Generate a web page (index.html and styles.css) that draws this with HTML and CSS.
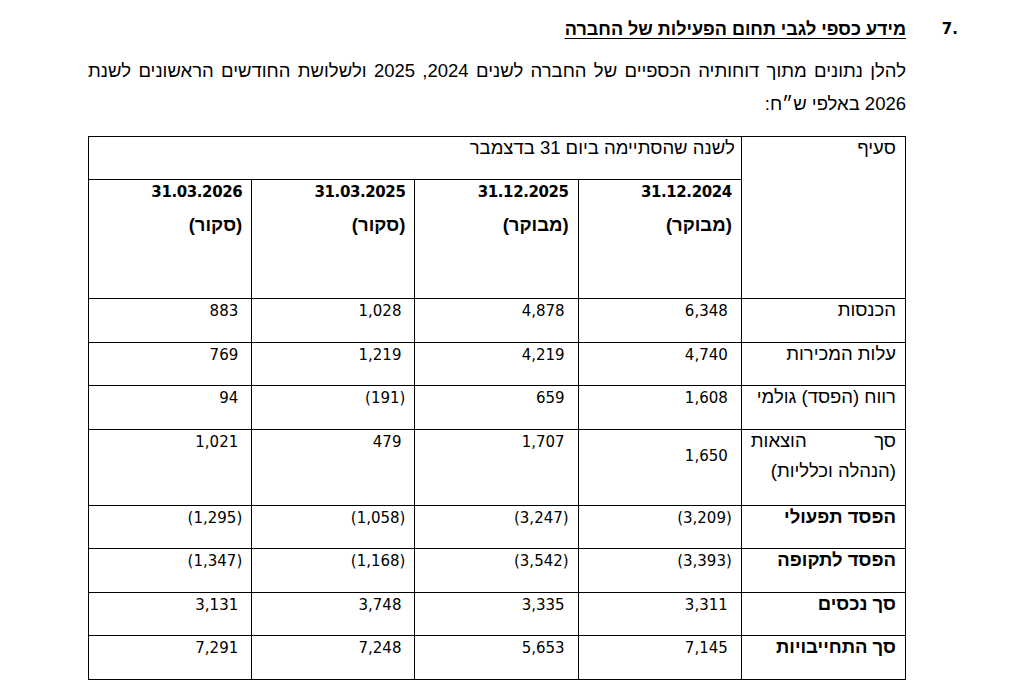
FILE: index.html
```html
<!DOCTYPE html>
<html lang="he">
<head>
<meta charset="utf-8">
<title>מידע כספי</title>
<link rel="stylesheet" href="styles.css">
</head>
<body>
<main class="page">
  <h2 class="heading"><span class="hnum">7.</span><span class="htext">מידע כספי לגבי תחום הפעילות של החברה</span></h2>
  <p class="intro"><span class="l1">להלן נתונים מתוך דוחותיה הכספיים של החברה לשנים 2024, 2025 ולשלושת החודשים הראשונים לשנת</span><span class="l2">2026 באלפי ש״ח:</span></p>
  <table class="fin">
    <colgroup>
      <col class="c-label"><col class="c-val"><col class="c-val"><col class="c-val"><col class="c-val">
    </colgroup>
    <tr class="hr1">
      <td class="label" rowspan="2">סעיף</td>
      <td class="period" colspan="4">לשנה שהסתיימה ביום 31 בדצמבר</td>
    </tr>
    <tr class="hr2">
      <td class="date"><span class="d1">31.12.2024</span><span class="d2">(מבוקר)</span></td>
      <td class="date"><span class="d1">31.12.2025</span><span class="d2">(מבוקר)</span></td>
      <td class="date"><span class="d1">31.03.2025</span><span class="d2">(סקור)</span></td>
      <td class="date"><span class="d1">31.03.2026</span><span class="d2">(סקור)</span></td>
    </tr>
    <tr class="dr">
      <td class="label">הכנסות</td>
      <td class="num pos">6,348</td><td class="num pos">4,878</td><td class="num pos">1,028</td><td class="num pos">883</td>
    </tr>
    <tr class="dr">
      <td class="label">עלות המכירות</td>
      <td class="num pos">4,740</td><td class="num pos">4,219</td><td class="num pos">1,219</td><td class="num pos">769</td>
    </tr>
    <tr class="dr">
      <td class="label">רווח (הפסד) גולמי</td>
      <td class="num pos">1,608</td><td class="num pos">659</td><td class="num neg">(191)</td><td class="num pos">94</td>
    </tr>
    <tr class="dr2">
      <td class="label"><span class="ln just">סך הוצאות</span><span class="ln ln2">(הנהלה וכלליות)</span></td>
      <td class="num pos mid">1,650</td><td class="num pos">1,707</td><td class="num pos">479</td><td class="num pos">1,021</td>
    </tr>
    <tr class="dr">
      <td class="label strong">הפסד תפעולי</td>
      <td class="num neg">(3,209)</td><td class="num neg">(3,247)</td><td class="num neg">(1,058)</td><td class="num neg">(1,295)</td>
    </tr>
    <tr class="dr">
      <td class="label strong">הפסד לתקופה</td>
      <td class="num neg">(3,393)</td><td class="num neg">(3,542)</td><td class="num neg">(1,168)</td><td class="num neg">(1,347)</td>
    </tr>
    <tr class="dr">
      <td class="label strong">סך נכסים</td>
      <td class="num pos">3,311</td><td class="num pos">3,335</td><td class="num pos">3,748</td><td class="num pos">3,131</td>
    </tr>
    <tr class="dr">
      <td class="label strong">סך התחייבויות</td>
      <td class="num pos">7,145</td><td class="num pos">5,653</td><td class="num pos">7,248</td><td class="num pos">7,291</td>
    </tr>
  </table>
</main>
</body>
</html>
```

FILE: styles.css
```css
html, body {
  margin: 0;
  padding: 0;
  background: #fff;
}

body {
  font-family: "Liberation Sans", "DejaVu Sans", sans-serif;
  font-size: 18.5px;
  color: #000;
}

.page {
  direction: rtl;
  width: 870px;
  margin-left: 88px;
  padding-top: 19px;
}

.heading {
  display: flex;
  margin: 0;
  font-size: 18px;
  font-weight: bold;
  line-height: 20px;
}

.hnum {
  flex: none;
  width: 52px;
  direction: ltr;
  unicode-bidi: isolate;
  text-align: right;
  font-family: "DejaVu Sans", sans-serif;
  font-size: 15px;
}

.htext {
  text-decoration: underline;
  text-decoration-thickness: 1px;
  text-underline-offset: 3px;
}

.intro {
  margin: 15px 52px 0 0;
  line-height: 33px;
}

.l1 {
  display: block;
  white-space: nowrap;
  text-align: justify;
  text-align-last: justify;
}

.l2 {
  display: block;
}

.fin {
  margin: 16px 52px 0 0;
  width: 818px;
  table-layout: fixed;
  border-collapse: collapse;
  border: 1px solid #000;
}

.c-label { width: 164px; }
.c-val { width: 163px; }

.fin td {
  border: 1px solid #000;
  padding: 1px 9px 0 9px;
  line-height: 20px;
  vertical-align: top;
  text-align: right;
}

.hr1 { height: 43px; }
.hr2 { height: 119px; }
.dr { height: 43.5px; }
.dr2 { height: 76px; }

.fin td.period {
  padding-right: 6px;
}

.fin td.date {
  padding-top: 2px;
  font-weight: bold;
}

.d1 {
  display: block;
  font-family: "DejaVu Sans", sans-serif;
  font-size: 15px;
  letter-spacing: -0.4px;
}

.d2 {
  display: block;
  margin-top: 13px;
}

.fin td.num {
  direction: ltr;
  unicode-bidi: isolate;
  padding-top: 2px;
  font-family: "DejaVu Sans", sans-serif;
  font-size: 15px;
}

.fin td.pos { padding-right: 13px; }
.fin td.neg { padding-right: 9px; }
.fin td.mid {
  vertical-align: middle;
  padding-bottom: 24px;
}

.strong { font-weight: bold; }

.ln { display: block; }
.just {
  text-align: justify;
  text-align-last: justify;
}
.ln2 { margin-top: 10px; }
```
